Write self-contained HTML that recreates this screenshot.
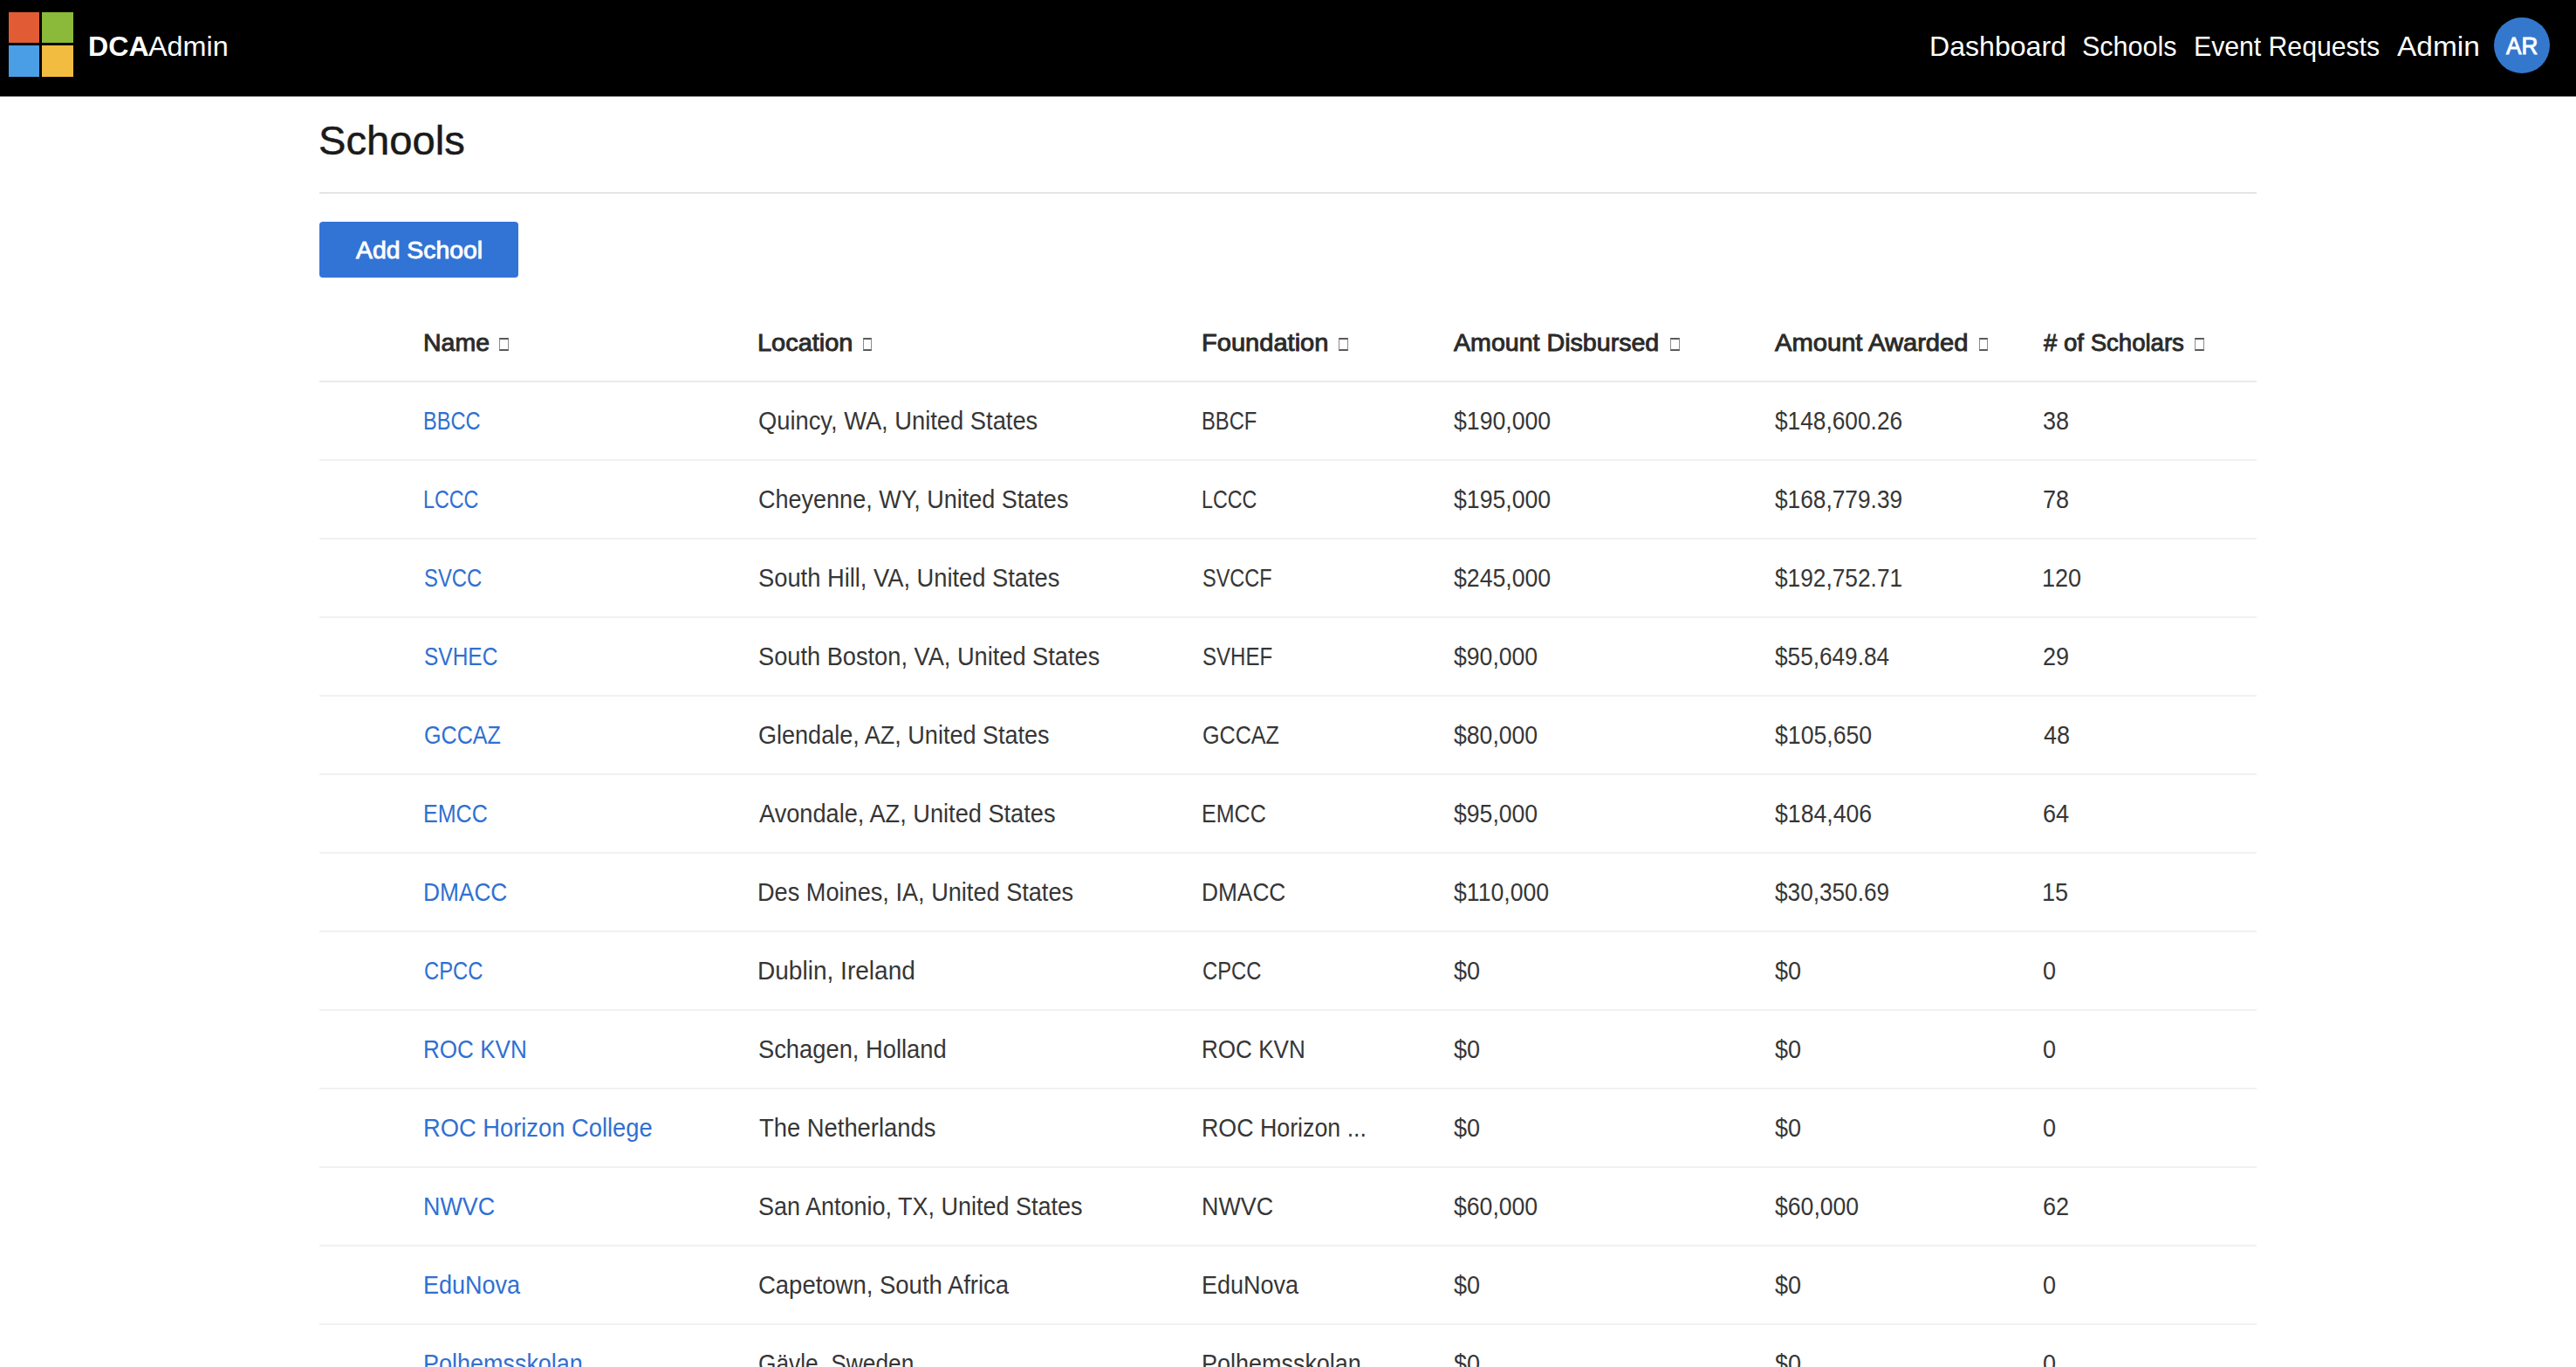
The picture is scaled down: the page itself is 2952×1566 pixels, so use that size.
<!DOCTYPE html>
<html><head><meta charset="utf-8"><title>Schools - DCA Admin</title>
<style>
html,body{margin:0;padding:0;background:#fff;}
body{width:2952px;height:1566px;overflow:hidden;position:relative;font-family:"Liberation Sans",sans-serif;}
.t{position:absolute;white-space:nowrap;line-height:1;transform-origin:0 0;}
.nav{position:absolute;left:0;top:0;width:2952px;height:110px;background:#000;}
.sq{position:absolute;}
.w{color:#fff;}
.th{color:#2a2a2a;}
.td{color:#292929;}
.a{color:#2f70d2;}
.box{position:absolute;width:8.6px;height:11.2px;border-top:2px solid #5a5a5a;border-bottom:2px solid #5a5a5a;border-left:1.5px solid #8c8c8c;border-right:1.5px solid #8c8c8c;top:386.5px;}
.line{position:absolute;left:366px;width:2220px;height:2px;}
</style></head><body>

<div class="nav">
<div class="sq" style="left:10px;top:14px;width:35px;height:35px;background:#e15b35"></div>
<div class="sq" style="left:48px;top:14px;width:36px;height:35px;background:#8bb93a"></div>
<div class="sq" style="left:10px;top:52px;width:35px;height:36px;background:#4a9ee6"></div>
<div class="sq" style="left:48px;top:52px;width:36px;height:36px;background:#f2bc40"></div>
<div class="t" style="left:100.59px;top:38.38px;font-size:30.5px;font-weight:700;transform:scaleX(1.0538);color:#fff">DCA</div>
<div class="t" style="left:169.60px;top:38.38px;font-size:30.5px;font-weight:400;transform:scaleX(1.0605);color:#fff">Admin</div>
<div class="t" style="left:2210.90px;top:37.88px;font-size:30.5px;font-weight:400;transform:scaleX(1.0520);color:#fff">Dashboard</div>
<div class="t" style="left:2386.00px;top:37.88px;font-size:30.5px;font-weight:400;color:#fff">Schools</div>
<div class="t" style="left:2513.82px;top:37.88px;font-size:30.5px;font-weight:400;transform:scaleX(0.9894);color:#fff">Event Requests</div>
<div class="t" style="left:2747.00px;top:37.88px;font-size:30.5px;font-weight:400;transform:scaleX(1.0960);color:#fff">Admin</div>
<div style="position:absolute;left:2858px;top:20px;width:64px;height:64px;border-radius:50%;background:#3478ce"></div>
<div class="t" style="left:2871.85px;top:39.64px;font-size:27px;font-weight:400;transform:scaleX(0.9673);color:#fff;-webkit-text-stroke:0.9px #fff">AR</div>
</div>
<div style="position:absolute;left:0;top:110px;width:2952px;height:1px;background:#808080"></div>
<div class="t" style="left:364.99px;top:137.31px;font-size:47px;font-weight:400;transform:scaleX(1.0030);color:#1a1a1a;-webkit-text-stroke:0.5px #1a1a1a">Schools</div>
<div class="line" style="top:220px;background:#e4e4e4"></div>
<div style="position:absolute;left:366px;top:254px;width:228px;height:64px;border-radius:4px;background:#3274d5"></div>
<div class="t" style="left:408.45px;top:273.12px;font-size:27.5px;font-weight:400;transform:scaleX(1.0312);color:#fff;-webkit-text-stroke:0.9px #fff">Add School</div>
<div class="t" style="left:484.75px;top:379.48px;font-size:27.2px;font-weight:400;transform:scaleX(1.0475);color:#2a2a2a;-webkit-text-stroke:0.9px #2a2a2a">Name</div>
<div class="box" style="left:572.3px"></div>
<div class="t" style="left:868.32px;top:379.48px;font-size:27.2px;font-weight:400;transform:scaleX(1.0645);color:#2a2a2a;-webkit-text-stroke:0.9px #2a2a2a">Location</div>
<div class="box" style="left:988.5px"></div>
<div class="t" style="left:1376.71px;top:379.48px;font-size:27.2px;font-weight:400;transform:scaleX(1.0690);color:#2a2a2a;-webkit-text-stroke:0.9px #2a2a2a">Foundation</div>
<div class="box" style="left:1534px"></div>
<div class="t" style="left:1666.45px;top:379.48px;font-size:27.2px;font-weight:400;transform:scaleX(1.0520);color:#2a2a2a;-webkit-text-stroke:0.9px #2a2a2a">Amount Disbursed</div>
<div class="box" style="left:1914px"></div>
<div class="t" style="left:2034.15px;top:379.48px;font-size:27.2px;font-weight:400;transform:scaleX(1.0723);color:#2a2a2a;-webkit-text-stroke:0.9px #2a2a2a">Amount Awarded</div>
<div class="box" style="left:2267.6px"></div>
<div class="t" style="left:2342.25px;top:379.48px;font-size:27.2px;font-weight:400;transform:scaleX(1.0140);color:#2a2a2a;-webkit-text-stroke:0.9px #2a2a2a"># of Scholars</div>
<div class="box" style="left:2515px"></div>
<div class="line" style="top:436.3px;background:#ebeae8"></div>
<div class="t" style="left:485.15px;top:468.29px;font-size:28.6px;font-weight:400;transform:scaleX(0.8243);color:#2f70d2">BBCC</div>
<div class="t" style="left:868.94px;top:468.29px;font-size:28.6px;font-weight:400;transform:scaleX(0.9551);color:#363636">Quincy, WA, United States</div>
<div class="t" style="left:1376.94px;top:468.29px;font-size:28.6px;font-weight:400;transform:scaleX(0.8307);color:#363636">BBCF</div>
<div class="t" style="left:1666.00px;top:468.29px;font-size:28.6px;font-weight:400;transform:scaleX(0.9322);color:#363636">$190,000</div>
<div class="t" style="left:2034.00px;top:468.29px;font-size:28.6px;font-weight:400;transform:scaleX(0.9188);color:#363636">$148,600.26</div>
<div class="t" style="left:2341.06px;top:468.29px;font-size:28.6px;font-weight:400;transform:scaleX(0.9441);color:#363636">38</div>
<div class="line" style="top:526.1px;background:#f2f1ef"></div>
<div class="t" style="left:485.17px;top:558.24px;font-size:28.6px;font-weight:400;transform:scaleX(0.8138);color:#2f70d2">LCCC</div>
<div class="t" style="left:868.96px;top:558.24px;font-size:28.6px;font-weight:400;transform:scaleX(0.9448);color:#363636">Cheyenne, WY, United States</div>
<div class="t" style="left:1376.97px;top:558.24px;font-size:28.6px;font-weight:400;transform:scaleX(0.8138);color:#363636">LCCC</div>
<div class="t" style="left:1666.00px;top:558.24px;font-size:28.6px;font-weight:400;transform:scaleX(0.9322);color:#363636">$195,000</div>
<div class="t" style="left:2034.00px;top:558.24px;font-size:28.6px;font-weight:400;transform:scaleX(0.9188);color:#363636">$168,779.39</div>
<div class="t" style="left:2341.06px;top:558.24px;font-size:28.6px;font-weight:400;transform:scaleX(0.9441);color:#363636">78</div>
<div class="line" style="top:616.05px;background:#f2f1ef"></div>
<div class="t" style="left:485.97px;top:648.19px;font-size:28.6px;font-weight:400;transform:scaleX(0.8343);color:#2f70d2">SVCC</div>
<div class="t" style="left:868.95px;top:648.19px;font-size:28.6px;font-weight:400;transform:scaleX(0.9547);color:#363636">South Hill, VA, United States</div>
<div class="t" style="left:1377.78px;top:648.19px;font-size:28.6px;font-weight:400;transform:scaleX(0.8214);color:#363636">SVCCF</div>
<div class="t" style="left:1666.00px;top:648.19px;font-size:28.6px;font-weight:400;transform:scaleX(0.9322);color:#363636">$245,000</div>
<div class="t" style="left:2034.00px;top:648.19px;font-size:28.6px;font-weight:400;transform:scaleX(0.9188);color:#363636">$192,752.71</div>
<div class="t" style="left:2340.11px;top:648.19px;font-size:28.6px;font-weight:400;transform:scaleX(0.9441);color:#363636">120</div>
<div class="line" style="top:706.0px;background:#f2f1ef"></div>
<div class="t" style="left:485.94px;top:738.14px;font-size:28.6px;font-weight:400;transform:scaleX(0.8558);color:#2f70d2">SVHEC</div>
<div class="t" style="left:868.95px;top:738.14px;font-size:28.6px;font-weight:400;transform:scaleX(0.9516);color:#363636">South Boston, VA, United States</div>
<div class="t" style="left:1377.76px;top:738.14px;font-size:28.6px;font-weight:400;transform:scaleX(0.8406);color:#363636">SVHEF</div>
<div class="t" style="left:1666.00px;top:738.14px;font-size:28.6px;font-weight:400;transform:scaleX(0.9304);color:#363636">$90,000</div>
<div class="t" style="left:2034.00px;top:738.14px;font-size:28.6px;font-weight:400;transform:scaleX(0.9161);color:#363636">$55,649.84</div>
<div class="t" style="left:2341.06px;top:738.14px;font-size:28.6px;font-weight:400;transform:scaleX(0.9441);color:#363636">29</div>
<div class="line" style="top:795.95px;background:#f2f1ef"></div>
<div class="t" style="left:485.92px;top:828.09px;font-size:28.6px;font-weight:400;transform:scaleX(0.8782);color:#2f70d2">GCCAZ</div>
<div class="t" style="left:868.95px;top:828.09px;font-size:28.6px;font-weight:400;transform:scaleX(0.9455);color:#363636">Glendale, AZ, United States</div>
<div class="t" style="left:1377.72px;top:828.09px;font-size:28.6px;font-weight:400;transform:scaleX(0.8782);color:#363636">GCCAZ</div>
<div class="t" style="left:1666.00px;top:828.09px;font-size:28.6px;font-weight:400;transform:scaleX(0.9304);color:#363636">$80,000</div>
<div class="t" style="left:2034.00px;top:828.09px;font-size:28.6px;font-weight:400;transform:scaleX(0.9322);color:#363636">$105,650</div>
<div class="t" style="left:2342.00px;top:828.09px;font-size:28.6px;font-weight:400;transform:scaleX(0.9441);color:#363636">48</div>
<div class="line" style="top:885.9px;background:#f2f1ef"></div>
<div class="t" style="left:485.05px;top:918.04px;font-size:28.6px;font-weight:400;transform:scaleX(0.8756);color:#2f70d2">EMCC</div>
<div class="t" style="left:869.90px;top:918.04px;font-size:28.6px;font-weight:400;transform:scaleX(0.9506);color:#363636">Avondale, AZ, United States</div>
<div class="t" style="left:1376.85px;top:918.04px;font-size:28.6px;font-weight:400;transform:scaleX(0.8756);color:#363636">EMCC</div>
<div class="t" style="left:1666.00px;top:918.04px;font-size:28.6px;font-weight:400;transform:scaleX(0.9304);color:#363636">$95,000</div>
<div class="t" style="left:2034.00px;top:918.04px;font-size:28.6px;font-weight:400;transform:scaleX(0.9322);color:#363636">$184,406</div>
<div class="t" style="left:2341.06px;top:918.04px;font-size:28.6px;font-weight:400;transform:scaleX(0.9441);color:#363636">64</div>
<div class="line" style="top:975.85px;background:#f2f1ef"></div>
<div class="t" style="left:484.96px;top:1007.99px;font-size:28.6px;font-weight:400;transform:scaleX(0.9189);color:#2f70d2">DMACC</div>
<div class="t" style="left:868.00px;top:1007.99px;font-size:28.6px;font-weight:400;transform:scaleX(0.9493);color:#363636">Des Moines, IA, United States</div>
<div class="t" style="left:1376.76px;top:1007.99px;font-size:28.6px;font-weight:400;transform:scaleX(0.9189);color:#363636">DMACC</div>
<div class="t" style="left:1666.00px;top:1007.99px;font-size:28.6px;font-weight:400;transform:scaleX(0.9320);color:#363636">$110,000</div>
<div class="t" style="left:2034.00px;top:1007.99px;font-size:28.6px;font-weight:400;transform:scaleX(0.9159);color:#363636">$30,350.69</div>
<div class="t" style="left:2340.11px;top:1007.99px;font-size:28.6px;font-weight:400;transform:scaleX(0.9441);color:#363636">15</div>
<div class="line" style="top:1065.8px;background:#f2f1ef"></div>
<div class="t" style="left:485.97px;top:1097.94px;font-size:28.6px;font-weight:400;transform:scaleX(0.8315);color:#2f70d2">CPCC</div>
<div class="t" style="left:867.94px;top:1097.94px;font-size:28.6px;font-weight:400;transform:scaleX(0.9808);color:#363636">Dublin, Ireland</div>
<div class="t" style="left:1377.77px;top:1097.94px;font-size:28.6px;font-weight:400;transform:scaleX(0.8315);color:#363636">CPCC</div>
<div class="t" style="left:1666.00px;top:1097.94px;font-size:28.6px;font-weight:400;transform:scaleX(0.9441);color:#363636">$0</div>
<div class="t" style="left:2034.00px;top:1097.94px;font-size:28.6px;font-weight:400;transform:scaleX(0.9441);color:#363636">$0</div>
<div class="t" style="left:2341.06px;top:1097.94px;font-size:28.6px;font-weight:400;transform:scaleX(0.9441);color:#363636">0</div>
<div class="line" style="top:1155.75px;background:#f2f1ef"></div>
<div class="t" style="left:484.98px;top:1187.89px;font-size:28.6px;font-weight:400;transform:scaleX(0.9113);color:#2f70d2">ROC KVN</div>
<div class="t" style="left:868.94px;top:1187.89px;font-size:28.6px;font-weight:400;transform:scaleX(0.9552);color:#363636">Schagen, Holland</div>
<div class="t" style="left:1376.78px;top:1187.89px;font-size:28.6px;font-weight:400;transform:scaleX(0.9113);color:#363636">ROC KVN</div>
<div class="t" style="left:1666.00px;top:1187.89px;font-size:28.6px;font-weight:400;transform:scaleX(0.9441);color:#363636">$0</div>
<div class="t" style="left:2034.00px;top:1187.89px;font-size:28.6px;font-weight:400;transform:scaleX(0.9441);color:#363636">$0</div>
<div class="t" style="left:2341.06px;top:1187.89px;font-size:28.6px;font-weight:400;transform:scaleX(0.9441);color:#363636">0</div>
<div class="line" style="top:1245.7px;background:#f2f1ef"></div>
<div class="t" style="left:484.89px;top:1277.84px;font-size:28.6px;font-weight:400;transform:scaleX(0.9551);color:#2f70d2">ROC Horizon College</div>
<div class="t" style="left:869.90px;top:1277.84px;font-size:28.6px;font-weight:400;transform:scaleX(0.9574);color:#363636">The Netherlands</div>
<div class="t" style="left:1376.73px;top:1277.84px;font-size:28.6px;font-weight:400;transform:scaleX(0.9366);color:#363636">ROC Horizon ...</div>
<div class="t" style="left:1666.00px;top:1277.84px;font-size:28.6px;font-weight:400;transform:scaleX(0.9441);color:#363636">$0</div>
<div class="t" style="left:2034.00px;top:1277.84px;font-size:28.6px;font-weight:400;transform:scaleX(0.9441);color:#363636">$0</div>
<div class="t" style="left:2341.06px;top:1277.84px;font-size:28.6px;font-weight:400;transform:scaleX(0.9441);color:#363636">0</div>
<div class="line" style="top:1335.65px;background:#f2f1ef"></div>
<div class="t" style="left:484.92px;top:1367.79px;font-size:28.6px;font-weight:400;transform:scaleX(0.9397);color:#2f70d2">NWVC</div>
<div class="t" style="left:868.96px;top:1367.79px;font-size:28.6px;font-weight:400;transform:scaleX(0.9438);color:#363636">San Antonio, TX, United States</div>
<div class="t" style="left:1376.72px;top:1367.79px;font-size:28.6px;font-weight:400;transform:scaleX(0.9397);color:#363636">NWVC</div>
<div class="t" style="left:1666.00px;top:1367.79px;font-size:28.6px;font-weight:400;transform:scaleX(0.9304);color:#363636">$60,000</div>
<div class="t" style="left:2034.00px;top:1367.79px;font-size:28.6px;font-weight:400;transform:scaleX(0.9304);color:#363636">$60,000</div>
<div class="t" style="left:2341.06px;top:1367.79px;font-size:28.6px;font-weight:400;transform:scaleX(0.9441);color:#363636">62</div>
<div class="line" style="top:1425.6px;background:#f2f1ef"></div>
<div class="t" style="left:484.91px;top:1457.74px;font-size:28.6px;font-weight:400;transform:scaleX(0.9445);color:#2f70d2">EduNova</div>
<div class="t" style="left:868.94px;top:1457.74px;font-size:28.6px;font-weight:400;transform:scaleX(0.9609);color:#363636">Capetown, South Africa</div>
<div class="t" style="left:1376.71px;top:1457.74px;font-size:28.6px;font-weight:400;transform:scaleX(0.9445);color:#363636">EduNova</div>
<div class="t" style="left:1666.00px;top:1457.74px;font-size:28.6px;font-weight:400;transform:scaleX(0.9441);color:#363636">$0</div>
<div class="t" style="left:2034.00px;top:1457.74px;font-size:28.6px;font-weight:400;transform:scaleX(0.9441);color:#363636">$0</div>
<div class="t" style="left:2341.06px;top:1457.74px;font-size:28.6px;font-weight:400;transform:scaleX(0.9441);color:#363636">0</div>
<div class="line" style="top:1515.55px;background:#f2f1ef"></div>
<div class="t" style="left:484.91px;top:1547.69px;font-size:28.6px;font-weight:400;transform:scaleX(0.9429);color:#2f70d2">Polhemsskolan</div>
<div class="t" style="left:868.98px;top:1547.69px;font-size:28.6px;font-weight:400;transform:scaleX(0.9197);color:#363636">Gävle, Sweden</div>
<div class="t" style="left:1376.71px;top:1547.69px;font-size:28.6px;font-weight:400;transform:scaleX(0.9429);color:#363636">Polhemsskolan</div>
<div class="t" style="left:1666.00px;top:1547.69px;font-size:28.6px;font-weight:400;transform:scaleX(0.9441);color:#363636">$0</div>
<div class="t" style="left:2034.00px;top:1547.69px;font-size:28.6px;font-weight:400;transform:scaleX(0.9441);color:#363636">$0</div>
<div class="t" style="left:2341.06px;top:1547.69px;font-size:28.6px;font-weight:400;transform:scaleX(0.9441);color:#363636">0</div>
</body></html>
